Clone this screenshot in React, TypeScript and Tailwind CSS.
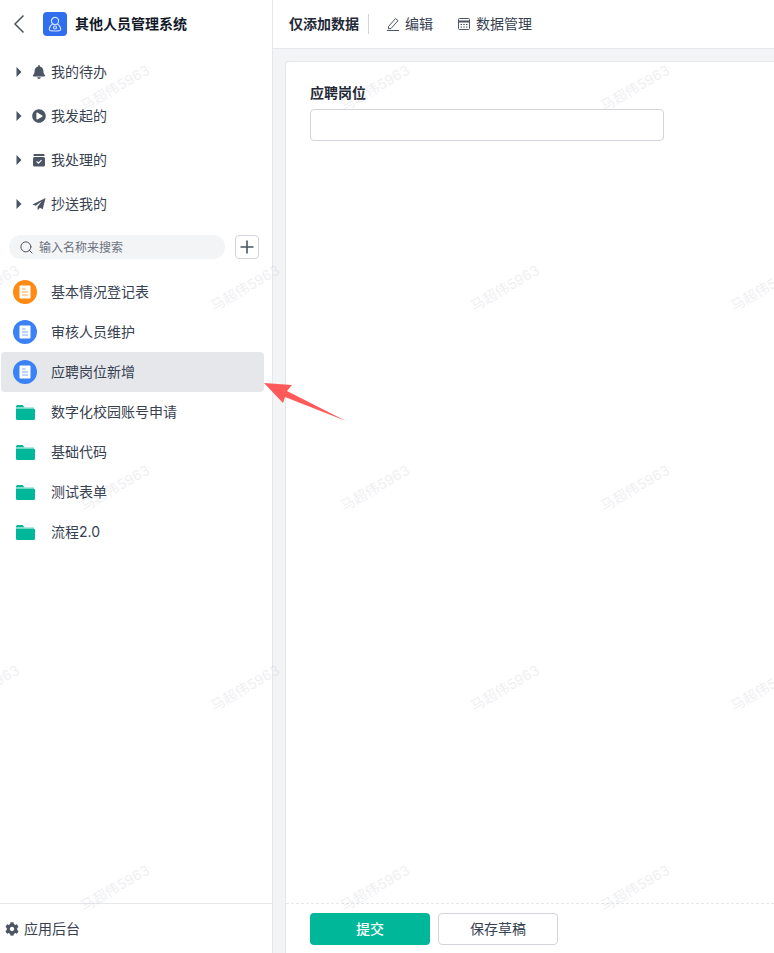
import React from "react";
import { Search } from "lucide-react";
import { FaCog, FaBell, FaPlayCircle } from "react-icons/fa";

function Caret() {
  return (
    <svg width="6" height="10" viewBox="0 0 6 10" className="shrink-0">
      <path d="M0.5 0 L5.5 5 L0.5 10 Z" fill="#4b5563" />
    </svg>
  );
}
function Box() {
  return (
    <svg width="14" height="14" viewBox="0 0 14 14">
      <path d="M2.500 1h9a1 1 0 0 1 1 1v1h-11V2a1 1 0 0 1 1-1z" fill="#4b5563" />
      <rect x="1" y="4" width="12" height="9.500" rx="1.500" fill="#4b5563" />
      <path d="M4.600 8.400 L6.400 10.200 L9.500 7.100" fill="none" stroke="#fff" strokeWidth="1.200" />
    </svg>
  );
}
function Send() {
  return (
    <svg width="15" height="14" viewBox="0 0 15 14">
      <path d="M14.500 0.500 L0.500 7.500 L4 9 L10.500 4 L6 10 L6 13.800 L8.500 11 L11.500 12.500 Z" fill="#4b5563" />
    </svg>
  );
}
function Doc({ color, line }: { color: string; line: string }) {
  return (
    <div className="w-6 h-6 rounded-full flex items-center justify-center shrink-0" style={{ backgroundColor: color }}>
      <svg width="12" height="14" viewBox="0 0 12 14">
        <rect x="0.500" y="0.500" width="11" height="13" rx="1" fill="#fff" />
        <path d="M3 4h3.500M3 7h6M3 10h6" stroke={line} strokeWidth="1.300" />
      </svg>
    </div>
  );
}
function Folder() {
  return (
    <div className="w-6 h-6 flex items-center justify-center shrink-0">
      <svg width="19" height="15" viewBox="0 0 19 15">
        <path d="M0 1.500A1.500 1.500 0 0 1 1.500 0h5l2 2.400H0z" fill="#00b899" />
        <path d="M8.500 2.400H18v.8H0v-.8z" fill="#7fdccb" />
        <path d="M0 3.600h17.500a1.500 1.500 0 0 1 1.500 1.500v8.400a1.500 1.500 0 0 1-1.500 1.500H1.500A1.500 1.500 0 0 1 0 13.500z" fill="#00b899" />
      </svg>
    </div>
  );
}

const navs = [
  { label: "我的待办", icon: <FaBell size={14} color="#4b5563" /> },
  { label: "我发起的", icon: <FaPlayCircle size={14} color="#4b5563" /> },
  { label: "我处理的", icon: <Box /> },
  { label: "抄送我的", icon: <Send /> },
];

const orange = { color: "#ff8a14", line: "#ffc48a" };
const blue = { color: "#3b82f6", line: "#a5c8fb" };

const items = [
  { label: "基本情况登记表", icon: <Doc {...orange} /> },
  { label: "审核人员维护", icon: <Doc {...blue} /> },
  { label: "应聘岗位新增", icon: <Doc {...blue} />, active: true },
  { label: "数字化校园账号申请", icon: <Folder /> },
  { label: "基础代码", icon: <Folder /> },
  { label: "测试表单", icon: <Folder /> },
  { label: "流程2.0", icon: <Folder /> },
];

const marks = [
  [115, 88], [375, 88], [635, 88],
  [-15, 288], [245, 288], [505, 288], [765, 288],
  [115, 488], [375, 488], [635, 488],
  [-15, 688], [245, 688], [505, 688], [765, 688],
  [115, 888], [375, 888], [635, 888],
];

export default function App() {
  return (
    <div className="relative flex w-[774px] h-[953px] overflow-hidden bg-white text-sm text-[#1f2937] font-['Inter','Noto_Sans_CJK_SC',sans-serif]">
      <aside className="w-[273px] shrink-0 flex flex-col border-r border-[#e5e7eb] bg-white">
        <div className="h-12 flex items-center shrink-0">
          <svg width="12" height="20" viewBox="0 0 12 20" fill="none" stroke="#4b5563" strokeWidth="1.500" className="ml-[13px]">
            <path d="M10.500 1.500 L2 10 L10.500 18.500" />
          </svg>
          <div className="ml-[18px] w-6 h-6 rounded-[4px] bg-[#2f6fed] flex items-center justify-center">
            <svg width="14" height="16" viewBox="0 0 14 16" fill="none" stroke="#cfe0ff" strokeWidth="1.200">
              <circle cx="7" cy="5" r="3.600" />
              <path d="M4.500 8 C2 10 1 12 1.500 14 C2 15.300 12 15.300 12.500 14 C13 12 12 10 9.500 8" />
              <circle cx="7" cy="11.500" r="1.500" />
            </svg>
          </div>
          <span className="ml-2 font-bold text-[#111827]">其他人员管理系统</span>
        </div>
        <nav className="shrink-0 pt-[2px]">
          {navs.map((n) => (
            <div key={n.label} className="h-11 flex items-center pl-4">
              <Caret />
              <span className="ml-[10px] w-[14px] flex justify-center">{n.icon}</span>
              <span className="ml-[5px] text-[#374151]">{n.label}</span>
            </div>
          ))}
        </nav>
        <div className="flex items-center pl-[9px] mt-[9px] shrink-0">
          <div className="w-[216px] h-6 rounded-full bg-[#f3f4f6] flex items-center pl-[10px]">
            <Search size={15} className="text-[#4b5563]" strokeWidth={1.600} />
            <span className="ml-[5px] text-xs leading-6 pt-[1px] text-[#6b7280]">输入名称来搜索</span>
          </div>
          <div className="ml-[10px] w-6 h-6 rounded-[4px] border border-[#d1d5db] flex items-center justify-center">
            <svg width="14" height="14" viewBox="0 0 14 14" stroke="#4b5563" strokeWidth="1.600">
              <path d="M7 0.500V13.500M0.500 7H13.500" />
            </svg>
          </div>
        </div>
        <div className="flex-1 pt-[13px] pl-[1px] pr-2">
          {items.map((it) => (
            <div
              key={it.label}
              className={`h-10 flex items-center pl-3 rounded-[4px] ${it.active ? "bg-[#e5e7eb]" : ""}`}
            >
              {it.icon}
              <span className="ml-[14px] text-[#374151]">{it.label}</span>
            </div>
          ))}
        </div>
        <div className="h-[50px] shrink-0 border-t border-[#e5e7eb] flex items-center pl-[5px]">
          <FaCog size={14} color="#4b5563" />
          <span className="ml-[5px] text-[#374151]">应用后台</span>
        </div>
      </aside>

      <main className="flex-1 flex flex-col min-w-0">
        <header className="h-[49px] shrink-0 border-b border-[#e5e7eb] flex items-center pl-4">
          <span className="font-bold text-[#1f2937]">仅添加数据</span>
          <div className="ml-[9px] w-px h-5 bg-[#d1d5db]" />
          <svg width="14" height="14" viewBox="0 0 14 14" fill="none" stroke="#4b5563" strokeWidth="1" className="ml-[17px]">
            <path d="M2.500 9.500 L9.500 1.500 L12 3.700 L5 11.500 L2.500 11.800 Z" />
            <path d="M1 13.500H13" />
          </svg>
          <span className="ml-[5px] text-[#374151]">编辑</span>
          <svg width="14" height="14" viewBox="0 0 14 14" fill="none" stroke="#4b5563" className="ml-[24px]">
            <rect x="1.500" y="1.500" width="11" height="11" rx="1" />
            <path d="M1.500 4.500H12.500" strokeWidth="2" />
            <path d="M3.500 7.500h1.500M6.250 7.500h1.500M9 7.500h1.500M3.500 10h1.500M6.250 10h1.500M9 10h1.500" />
          </svg>
          <span className="ml-[5px] text-[#374151]">数据管理</span>
        </header>
        <div className="flex-1 bg-[#f3f4f6] pt-3 pl-3 flex flex-col min-h-0">
          <div className="flex-1 flex flex-col bg-white border-l border-t border-[#e5e7eb] rounded-tl-[4px]">
            <div className="flex-1 pl-6 pt-5">
              <div className="font-bold text-[#1f2937] leading-[22px]">应聘岗位</div>
              <div className="mt-[5px] w-[354px] h-8 rounded-[4px] border border-[#d1d5db] bg-white" />
            </div>
            <div className="h-[50px] shrink-0 border-t border-dashed border-[#e5e7eb] flex items-center pl-6 gap-2">
              <button className="w-[120px] h-8 rounded-[4px] bg-[#00b899] text-white font-medium">提交</button>
              <button className="w-[120px] h-8 rounded-[4px] border border-[#d1d5db] bg-white text-[#374151]">保存草稿</button>
            </div>
          </div>
        </div>
      </main>

      {marks.map(([x, y]) => (
        <div
          key={`${x}-${y}`}
          className="absolute pointer-events-none whitespace-nowrap text-sm text-[#9ca3af] opacity-[0.16] -rotate-30 -translate-x-1/2 -translate-y-1/2"
          style={{ left: x, top: y }}
        >
          马超伟5963
        </div>
      ))}

      <svg className="absolute left-[260px] top-[378px] pointer-events-none" width="90" height="48" viewBox="260 378 90 48">
        <path d="M264 383 L292 385 L287 391 L346 421 L285 397 L283 403 Z" fill="#ff5a5a" />
      </svg>
    </div>
  );
}
